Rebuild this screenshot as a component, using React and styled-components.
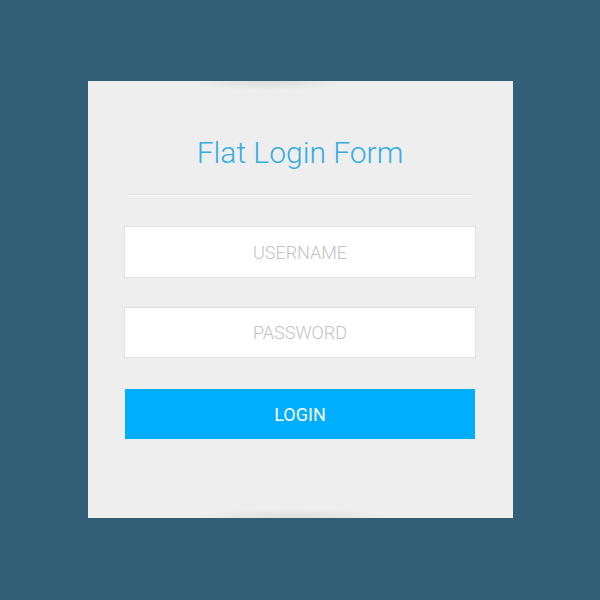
import React from "react";
import styled, { createGlobalStyle } from "styled-components";

const GlobalStyle = createGlobalStyle`
  html, body {
    margin: 0;
    padding: 0;
    background: #335f76;
    font-family: Roboto, "Liberation Sans", sans-serif;
  }
`;

const Page = styled.div`
  width: 600px;
  height: 600px;
  display: flex;
  justify-content: center;
  padding-top: 81px;
  box-sizing: border-box;
`;

const Card = styled.form`
  position: relative;
  width: 425px;
  height: 437px;
  margin-left: 1px;
  box-sizing: border-box;
  background: #eeeeee;
  padding: 54px 37px 0 36px;
  display: flex;
  flex-direction: column;

  /* faint curl shadows at top and bottom edges */
  &::before,
  &::after {
    content: "";
    position: absolute;
    height: 10px;
    pointer-events: none;
  }
  &::before {
    top: 0;
    left: 100px;
    width: 160px;
    background: radial-gradient(ellipse at 50% 0%, rgba(0,0,0,0.08), rgba(0,0,0,0) 70%);
  }
  &::after {
    bottom: 0;
    left: 105px;
    width: 200px;
    background: radial-gradient(ellipse at 50% 100%, rgba(0,0,0,0.07), rgba(0,0,0,0) 70%);
  }
`;

const Title = styled.h1`
  margin: 0;
  font-weight: 300;
  font-size: 30px;
  line-height: 36px;
  color: #35ade3;
  text-align: center;
`;

const Divider = styled.div`
  margin: 23px 4px 30px;
  height: 1px;
  background: #dedede;
  border-bottom: 1px solid #fafafa;
`;

const Field = styled.input`
  display: block;
  width: 100%;
  height: ${p => p.$h || 52}px;
  margin-bottom: ${p => p.$gap || 29}px;
  box-sizing: border-box;
  border: 1px solid #e0e0e0;
  background: #ffffff;
  outline: none;
  text-align: center;
  font-family: Roboto, "Liberation Sans", sans-serif;
  font-weight: 300;
  font-size: 18px;
  color: #999;

  &::placeholder {
    color: #c2c2c2;
    text-transform: uppercase;
  }
`;

const Button = styled.button`
  width: 350px;
  height: 50px;
  margin-left: 1px;
  border: 0;
  border-radius: 0;
  background: #00aeff;
  color: #ffffff;
  font-family: Roboto, "Liberation Sans", sans-serif;
  font-weight: 400;
  font-size: 18px;
  cursor: pointer;
`;

const App = () => {
  return (
    <>
      <GlobalStyle />
      <Page>
        <Card onSubmit={e => e.preventDefault()}>
          <Title>Flat Login Form</Title>
          <Divider />
          <Field type="text" placeholder="USERNAME" />
          <Field type="password" placeholder="PASSWORD" $h={51} $gap={31} />
          <Button type="submit">LOGIN</Button>
        </Card>
      </Page>
    </>
  );
};

export default App;
